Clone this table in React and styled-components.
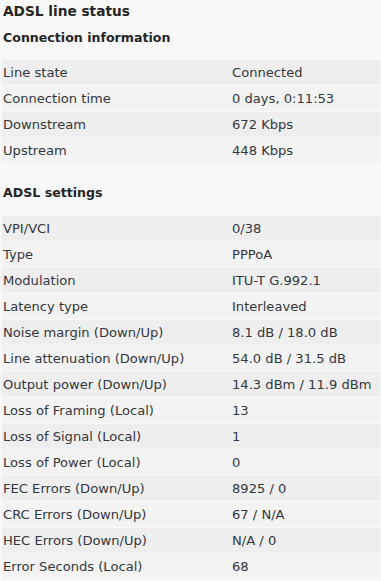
import React from "react";
import styled, { createGlobalStyle } from "styled-components";

const Global = createGlobalStyle`
  html, body { margin: 0; padding: 0; background: #f8f8f8; }
  body { font-family: "DejaVu Sans", Verdana, sans-serif; color: #333840; }
`;

const Page = styled.div`
  padding: 0 1px 0 2px;
  width: 378px;
`;

const Title = styled.h1`
  margin: 0;
  padding: 2px 0 0 1px;
  font-size: 13.7px;
  line-height: 18px;
  font-weight: bold;
  color: #262626;
`;

const Section = styled.h2`
  margin: 0;
  padding: ${(p) => p.$pad};
  font-size: 12.6px;
  line-height: 18px;
  font-weight: bold;
  color: #262626;
`;

const Table = styled.div`
  display: flex;
  flex-direction: column;
`;

const Row = styled.div`
  display: grid;
  grid-template-columns: 230px 1fr;
  height: 25px;
  align-items: center;
  border-bottom: 1px solid #fafafa;
  background: ${(p) => (p.$odd ? "#eeeeee" : "#f3f3f3")};
  font-size: 13.1px;
`;

const Label = styled.span`
  padding-left: 1px;
`;

const Value = styled.span``;

const connection = [
  ["Line state", "Connected"],
  ["Connection time", "0 days, 0:11:53"],
  ["Downstream", "672 Kbps"],
  ["Upstream", "448 Kbps"],
];

const settings = [
  ["VPI/VCI", "0/38"],
  ["Type", "PPPoA"],
  ["Modulation", "ITU-T G.992.1"],
  ["Latency type", "Interleaved"],
  ["Noise margin (Down/Up)", "8.1 dB / 18.0 dB"],
  ["Line attenuation (Down/Up)", "54.0 dB / 31.5 dB"],
  ["Output power (Down/Up)", "14.3 dBm / 11.9 dBm"],
  ["Loss of Framing (Local)", "13"],
  ["Loss of Signal (Local)", "1"],
  ["Loss of Power (Local)", "0"],
  ["FEC Errors (Down/Up)", "8925 / 0"],
  ["CRC Errors (Down/Up)", "67 / N/A"],
  ["HEC Errors (Down/Up)", "N/A / 0"],
  ["Error Seconds (Local)", "68"],
];

const DataTable = ({ rows }) => (
  <Table>
    {rows.map(([k, v], i) => (
      <Row key={k} $odd={i % 2 === 0}>
        <Label>{k}</Label>
        <Value>{v}</Value>
      </Row>
    ))}
  </Table>
);

export default function App() {
  return (
    <Page>
      <Global />
      <Title>ADSL line status</Title>
      <Section $pad="9px 0 13px 1px">Connection information</Section>
      <DataTable rows={connection} />
      <Section $pad="20px 0 14px 1px">ADSL settings</Section>
      <DataTable rows={settings} />
    </Page>
  );
}
